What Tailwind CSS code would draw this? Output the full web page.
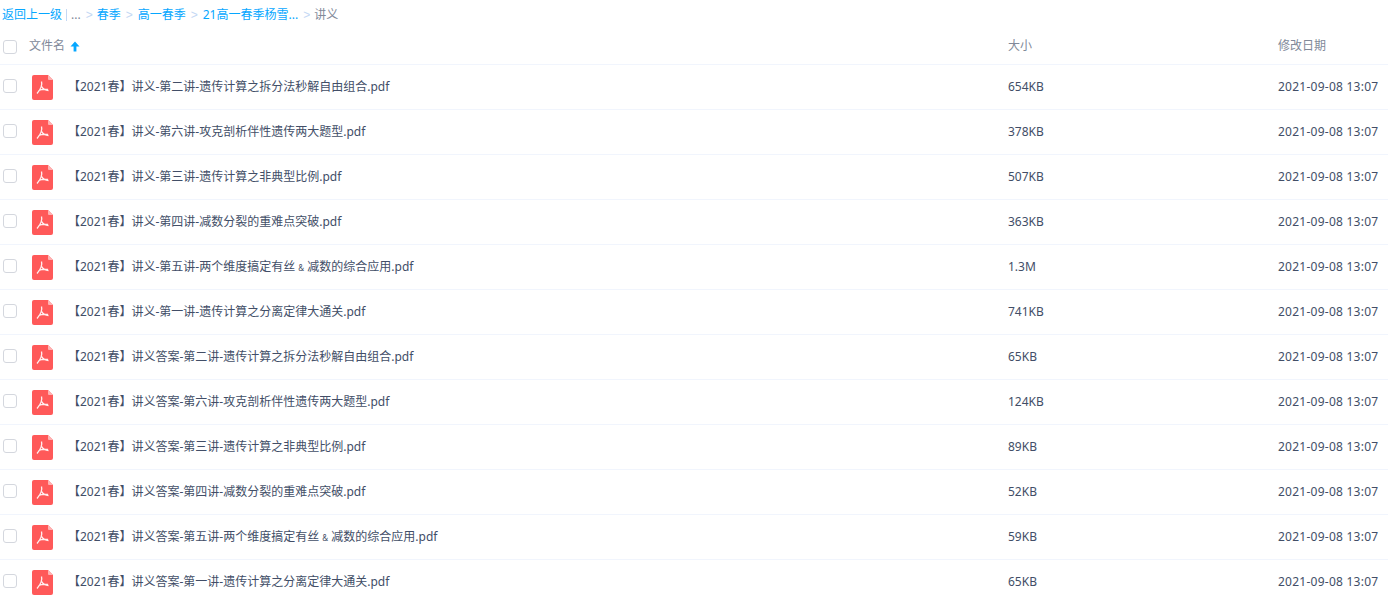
<!DOCTYPE html>
<html lang="en">

<head>
  <meta charset="UTF-8">
  <script src="https://cdn.jsdelivr.net/npm/@tailwindcss/browser@4"></script>
  <title>讲义</title>
</head>

<body class="bg-white overflow-hidden font-['Noto_Sans','Noto_Sans_CJK_SC',sans-serif] text-xs text-[#424e67]">
  <!-- breadcrumb -->
  <div class="h-[30px] pl-[2px] flex items-center text-[#06a7ff]">
    <a>返回上一级</a>
    <span class="mx-[4px] h-[12px] w-px bg-[#c4d8f4]"></span>
    <span class="text-[#818999]">...</span>
    <span class="ml-[5px] mr-[4px] font-['Liberation_Sans'] text-[#c4d8f4]">&gt;</span>
    <a>春季</a>
    <span class="mx-[5px] font-['Liberation_Sans'] text-[#c4d8f4]">&gt;</span>
    <a>高一春季</a>
    <span class="mx-[5px] font-['Liberation_Sans'] text-[#c4d8f4]">&gt;</span>
    <a>21高一春季杨雪...</a>
    <span class="ml-[5px] mr-[4px] font-['Liberation_Sans'] text-[#c4d8f4]">&gt;</span>
    <span class="text-[#818999]">讲义</span>
  </div>

  <!-- header -->
  <div class="h-[35px] pb-[2px] flex items-center border-b border-[#f1f5fd] text-[#818999]">
    <span class="ml-[3px] mt-[2px] w-[14px] h-[14px] rounded-[3px] border border-[#d4d7de]"></span>
    <div class="ml-[12px] w-[979px] flex items-center gap-[5px]">
      <span>文件名</span>
      <svg class="w-[10px] h-[11px]" viewBox="0 0 10 11"><path d="M5 .5 9.500 5.500H6.400V10.500H3.600V5.500H.5Z" fill="#06a7ff" /></svg>
    </div>
    <span class="w-[270px]">大小</span>
    <span>修改日期</span>
  </div>

  <div id="rows"></div>

  <script>
    const files = [
      ['【2021春】讲义-第二讲-遗传计算之拆分法秒解自由组合.pdf', '654KB'],
      ['【2021春】讲义-第六讲-攻克剖析伴性遗传两大题型.pdf', '378KB'],
      ['【2021春】讲义-第三讲-遗传计算之非典型比例.pdf', '507KB'],
      ['【2021春】讲义-第四讲-减数分裂的重难点突破.pdf', '363KB'],
      ['【2021春】讲义-第五讲-两个维度搞定有丝 <span class="text-[8px]">&amp;</span> 减数的综合应用.pdf', '1.3M'],
      ['【2021春】讲义-第一讲-遗传计算之分离定律大通关.pdf', '741KB'],
      ['【2021春】讲义答案-第二讲-遗传计算之拆分法秒解自由组合.pdf', '65KB'],
      ['【2021春】讲义答案-第六讲-攻克剖析伴性遗传两大题型.pdf', '124KB'],
      ['【2021春】讲义答案-第三讲-遗传计算之非典型比例.pdf', '89KB'],
      ['【2021春】讲义答案-第四讲-减数分裂的重难点突破.pdf', '52KB'],
      ['【2021春】讲义答案-第五讲-两个维度搞定有丝 <span class="text-[8px]">&amp;</span> 减数的综合应用.pdf', '59KB'],
      ['【2021春】讲义答案-第一讲-遗传计算之分离定律大通关.pdf', '65KB'],
    ]

    document.getElementById('rows').innerHTML = files.map(([name, size]) => `
      <div class="h-[45px] flex items-center border-b border-[#f1f5fd]">
        <span class="ml-[3px] -mt-[2px] w-[14px] h-[14px] rounded-[3px] border border-[#d4d7de]"></span>
        <svg class="ml-[15px] w-[21px] h-[25px]" viewBox="0 0 21 25">
          <path d="M2 0H16L21 5V23a2 2 0 0 1-2 2H2a2 2 0 0 1-2-2V2a2 2 0 0 1 2-2Z" fill="#ff5959" />
          <path d="M16 0 21 5H17a1 1 0 0 1-1-1Z" fill="#ffb3b3" />
          <path d="M9.500 6.500C10.500 10 8.500 14.500 5 18.500M9.700 11.500C11 14 13.500 15.500 16.500 15.500M6.500 15.500C9 14.500 12 14 16 14.500" fill="none" stroke="#fff" stroke-opacity="0.9" stroke-width="1.300" />
        </svg>
        <span class="ml-[15px] w-[940px] whitespace-nowrap">${name}</span>
        <span class="w-[270px]">${size}</span>
        <span class="tracking-[0.25px]">2021-09-08 13:07</span>
      </div>`).join('')
  </script>
</body>

</html>
